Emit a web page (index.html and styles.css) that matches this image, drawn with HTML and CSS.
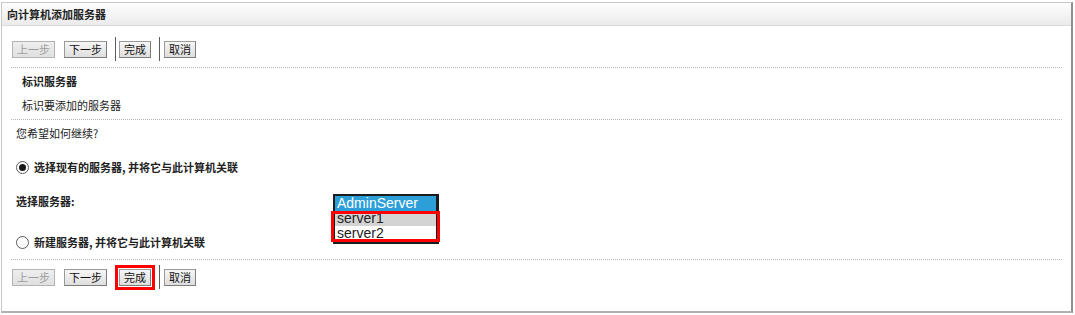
FILE: index.html
```html
<!DOCTYPE html>
<html lang="zh-CN">
<head>
    <meta charset="UTF-8">
    <title>向计算机添加服务器</title>
    <link rel="stylesheet" href="styles.css">
</head>
<body>
    <div class="wizard">
        <div class="wizard-head">向计算机添加服务器</div>
        <div class="wizard-body">
            <div class="toolbar">
                <span class="btn btn-disabled">上一步</span>
                <span class="btn">下一步</span>
                <span class="sep"></span>
                <span class="btn">完成</span>
                <span class="sep"></span>
                <span class="btn btn-last">取消</span>
            </div>

            <div class="step">
                <div class="step-title">标识服务器</div>
                <div class="step-desc">标识要添加的服务器</div>
            </div>

            <div class="question">您希望如何继续?</div>

            <label class="choice choice-first">
                <span class="radio radio-on"></span>
                <span>选择现有的服务器, 并将它与此计算机关联</span>
            </label>

            <div class="server-pick">
                <div class="pick-label">选择服务器:</div>
                <div class="listbox">
                    <div class="opt opt-selected">AdminServer</div>
                    <div class="opt-group">
                        <div class="opt opt-hover">server1</div>
                        <div class="opt">server2</div>
                    </div>
                </div>
                <label class="choice choice-new">
                    <span class="radio"></span>
                    <span>新建服务器, 并将它与此计算机关联</span>
                </label>
            </div>

            <div class="toolbar toolbar-bottom">
                <span class="btn btn-disabled">上一步</span>
                <span class="btn">下一步</span>
                <span class="sep"></span>
                <span class="btn btn-marked">完成</span>
                <span class="sep"></span>
                <span class="btn btn-last">取消</span>
            </div>
        </div>
    </div>
</body>
</html>
```

FILE: styles.css
```css
body {
    margin: 0;
    background: #fff;
    font-family: "Noto Sans CJK SC", "DejaVu Sans", sans-serif;
    font-size: 11px;
    color: #222;
}

.wizard {
    margin: 2px 1px 0 1px;
    width: 1072px;
    height: 311px;
    border: 1px solid #c9c9c9;
    border-right: 2px solid #8e8e8e;
    border-bottom: 2px solid #aeb2b2;
    box-sizing: border-box;
}
    .wizard-head {
        height: 22px;
        line-height: 22px;
        padding-left: 5px;
        font-weight: bold;
        background: linear-gradient(#fdfdfd, #ebebeb);
        border-bottom: 1px solid #d8dcd8;
    }

    .wizard-body {
        padding: 0 9px;
    }

        .toolbar {
            display: flex;
            align-items: center;
            height: 24px;
            padding: 11px 1px 6px;
            border-bottom: 1px dotted #b8b8b8;
        }
        .toolbar-bottom {
            border-bottom: 0;
            border-top: 1px dotted #b8b8b8;
            margin-top: 7px;
            padding-top: 5px;
        }

            .btn {
                display: block;
                height: 17px;
                line-height: 15px;
                padding: 0 4px;
                border: 1px solid #9a9a9a;
                border-right-color: #7c7c7c;
                border-bottom-color: #7c7c7c;
                box-sizing: border-box;
                background: linear-gradient(#f6f6f6, #dedede);
                color: #111;
                user-select: none;
            }
            .btn + .btn {
                margin-left: 9px;
            }
            .btn-disabled {
                color: #9c9c9c;
                border-color: #b4b4b4;
                background: linear-gradient(#eeeeee, #e0e0e0);
            }
            .btn-last {
                margin-left: 1px;
            }
            .btn-marked {
                outline: 3px solid #f00;
                outline-offset: 1px;
            }

            .sep {
                display: block;
                width: 1px;
                height: 24px;
                background: #5c5c5c;
                margin: 0 3px 0 8px;
            }

        .step {
            padding: 6px 11px 7px;
            border-bottom: 1px dotted #b8b8b8;
            line-height: 14px;
        }
            .step-title {
                font-weight: bold;
            }
            .step-desc {
                margin-top: 10px;
            }

        .question {
            margin-top: 6px;
            padding-left: 5px;
            line-height: 14px;
        }

        .choice {
            display: flex;
            align-items: center;
            height: 14px;
            padding-left: 5px;
            font-weight: bold;
        }
        .choice-first {
            margin-top: 20px;
        }

            .radio {
                display: block;
                width: 13px;
                height: 13px;
                border: 1px solid #5a5a5a;
                border-radius: 50%;
                box-sizing: border-box;
                background: #fff;
                margin-right: 5px;
                position: relative;
            }
            .radio-on::after {
                content: "";
                position: absolute;
                left: 2px; top: 2px;
                width: 7px; height: 7px;
                border-radius: 50%;
                background: #1a1a1a;
            }

        .server-pick {
            display: grid;
            grid-template-columns: 322px auto;
            grid-template-rows: 38px 20px;
            margin-top: 20px;
        }
            .pick-label {
                grid-column: 1;
                grid-row: 1;
                padding-left: 5px;
                line-height: 14px;
                font-weight: bold;
            }
            .choice-new {
                grid-column: 1;
                grid-row: 2;
                align-self: center;
                margin-top: 0;
            }

            .listbox {
                grid-column: 2;
                grid-row: 1 / 3;
                align-self: start;
                width: 106px;
                border: 2px solid #1c1c1c;
                border-right-width: 3px;
                border-bottom-width: 3px;
                box-sizing: border-box;
                font-family: "Liberation Sans", Arial, sans-serif;
                font-size: 14px;
            }
                .opt {
                    height: 15px;
                    line-height: 15px;
                    padding-left: 2px;
                    background: #fff;
                    color: #222;
                    white-space: nowrap;
                }
                .opt-selected {
                    background: #2c9fd9;
                    color: #fff;
                }
                .opt-hover {
                    background: #d3d3d3;
                }
                .opt-group {
                    position: relative;
                }
                .opt-group::after {
                    content: "";
                    position: absolute;
                    left: -4px; right: -4px;
                    top: 0; bottom: -1px;
                    border: 3px solid #f00;
                }
```
